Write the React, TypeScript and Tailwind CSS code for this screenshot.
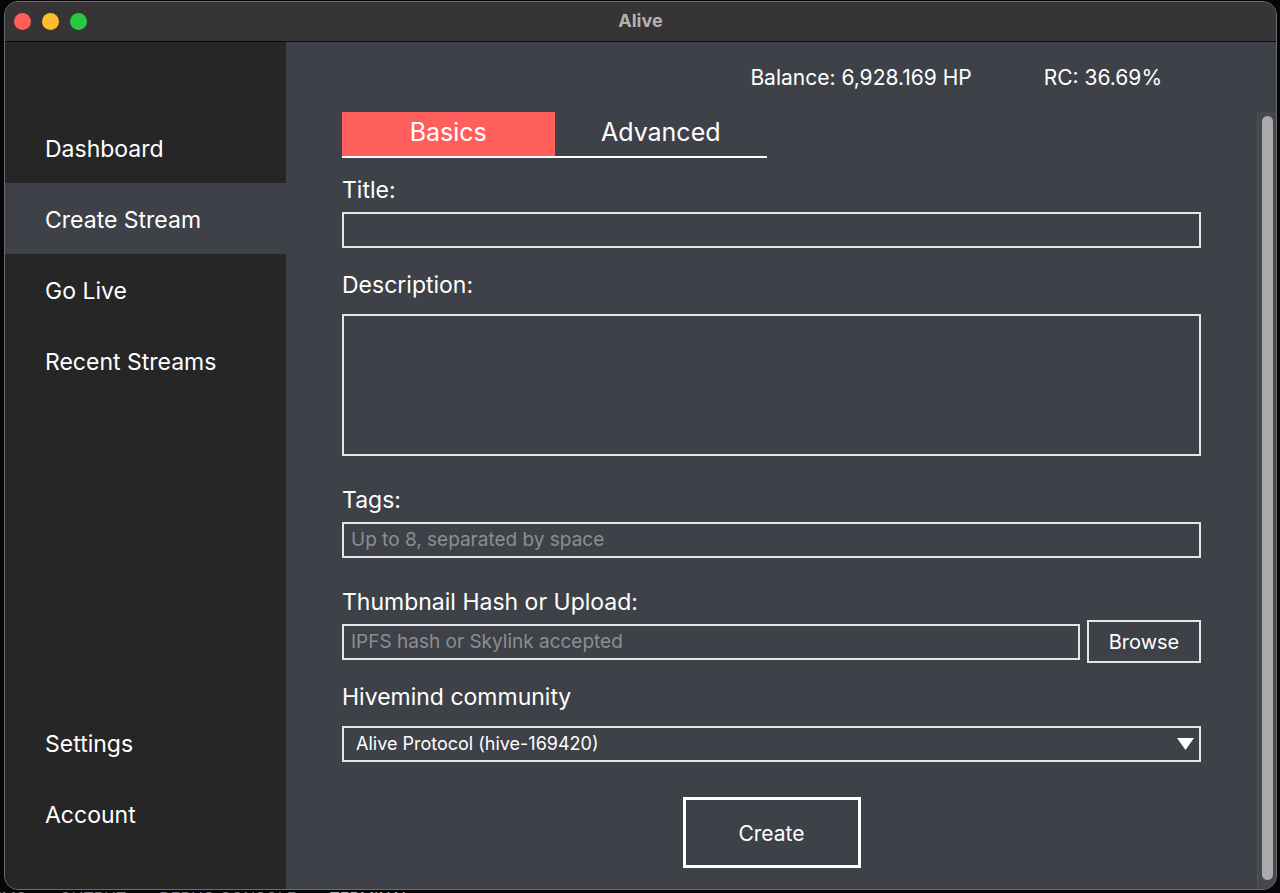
import { useState } from "react";

const mainNav = ["Dashboard", "Create Stream", "Go Live", "Recent Streams"];
const bottomNav = ["Settings", "Account"];
const tabs = ["Basics", "Advanced"];

const labelClass = "block text-[23px] leading-8";
const inputClass =
  "block h-9 w-full border-2 border-[#e4e5e8] bg-transparent px-[7px] pb-px text-[19px] placeholder:text-[#8d8e90] outline-none";

function NavItem({ label, active, onSelect }: { label: string; active: boolean; onSelect: () => void }) {
  return (
    <a
      href="#"
      onClick={(e) => {
        e.preventDefault();
        onSelect();
      }}
      className={`flex h-[71px] items-center px-10 pt-1 text-[23px] ${active ? "bg-[#3e4148]" : "hover:bg-[#303134]"}`}
    >
      {label}
    </a>
  );
}

function TitleBar() {
  return (
    <header className="grid h-10 shrink-0 grid-cols-3 items-center border-b border-[#0c0c0e] bg-[#373436] px-[9px]">
      <div className="flex gap-[11px]">
        <button aria-label="Close" className="size-[17px] rounded-full bg-[#ff5f57]" />
        <button aria-label="Minimize" className="size-[17px] rounded-full bg-[#febc2e]" />
        <button aria-label="Zoom" className="size-[17px] rounded-full bg-[#28c840]" />
      </div>
      <h1 className="pb-0.5 text-center text-lg font-bold text-[#b3b1b2]">Alive</h1>
    </header>
  );
}

export default function App() {
  const [page, setPage] = useState("Create Stream");
  const [tab, setTab] = useState("Basics");

  return (
    <div className="flex h-screen flex-col overflow-hidden bg-[#060608] pt-px pr-[3px] pl-1 font-['Inter',sans-serif] text-white">
      <div className="flex min-h-0 flex-1 flex-col overflow-hidden rounded-[14px] border border-[#6c6c6f] bg-[#3e4148]">
        <TitleBar />

        <div className="flex min-h-0 flex-1">
          {/* Sidebar */}
          <nav className="flex w-[281px] shrink-0 flex-col justify-between bg-[#262626] pt-[70px] pb-10">
            <div>
              {mainNav.map((label) => (
                <NavItem key={label} label={label} active={page === label} onSelect={() => setPage(label)} />
              ))}
            </div>
            <div>
              {bottomNav.map((label) => (
                <NavItem key={label} label={label} active={page === label} onSelect={() => setPage(label)} />
              ))}
            </div>
          </nav>

          <main className="flex min-w-0 flex-1 flex-col">
            <div className="flex h-[70px] shrink-0 items-center justify-end gap-[72px] pt-0.5 pr-[114px] text-[21px]">
              <span>Balance: 6,928.169 HP</span>
              <span>RC: 36.69%</span>
            </div>

            <div className="flex min-h-0 flex-1">
              <form className="min-w-0 flex-1 px-14" onSubmit={(e) => e.preventDefault()}>
                <div role="tablist" className="grid w-[425px] grid-cols-2 border-b-2 border-white">
                  {tabs.map((name) => (
                    <button
                      key={name}
                      type="button"
                      role="tab"
                      aria-selected={tab === name}
                      onClick={() => setTab(name)}
                      className={`h-11 pb-0.5 text-[25px] ${tab === name ? "bg-[#ff5f5c]" : ""}`}
                    >
                      {name}
                    </button>
                  ))}
                </div>

                <div className="mt-4">
                  <label htmlFor="title" className={labelClass}>Title:</label>
                  <input id="title" className={`mt-1.5 ${inputClass}`} />
                </div>

                <div className="mt-[21px]">
                  <label htmlFor="description" className={labelClass}>Description:</label>
                  <textarea
                    id="description"
                    className="mt-[13px] block h-[142px] w-full resize-none border-2 border-[#e4e5e8] bg-transparent px-[7px] py-1 text-[19px] outline-none"
                  />
                </div>

                <div className="mt-7">
                  <label htmlFor="tags" className={labelClass}>Tags:</label>
                  <input id="tags" placeholder="Up to 8, separated by space" className={`mt-1.5 ${inputClass}`} />
                </div>

                <div className="mt-7">
                  <label htmlFor="thumbnail" className={labelClass}>Thumbnail Hash or Upload:</label>
                  <div className="mt-0.5 flex items-center gap-[7px]">
                    <input id="thumbnail" placeholder="IPFS hash or Skylink accepted" className={inputClass} />
                    <button type="button" className="h-[43px] w-[114px] shrink-0 border-2 border-[#e4e5e8] text-xl">
                      Browse
                    </button>
                  </div>
                </div>

                <div className="mt-[18px]">
                  <label htmlFor="community" className={labelClass}>Hivemind community</label>
                  <div className="relative mt-[13px]">
                    <select
                      id="community"
                      className="block h-9 w-full appearance-none border-2 border-[#e4e5e8] bg-transparent px-3 text-lg outline-none"
                    >
                      <option>Alive Protocol (hive-169420)</option>
                    </select>
                    <svg viewBox="0 0 17 12" className="pointer-events-none absolute top-3 right-[7px] h-3 w-[17px]">
                      <path d="M0 0h17L8.5 12z" fill="#fff" />
                    </svg>
                  </div>
                </div>

                <button
                  type="submit"
                  className="mx-auto mt-[35px] block h-[71px] w-[178px] border-3 border-white pt-0.5 text-[21px]"
                >
                  Create
                </button>
              </form>

              {/* Scrollbar */}
              <div className="w-[19px] border-l border-[#4f5157] bg-[#46484e] pt-1 pr-[3px] pb-[9px] pl-1">
                <div className="h-full rounded-full bg-[#a8aaac]" />
              </div>
            </div>
          </main>
        </div>
      </div>

      {/* Editor panel behind the window */}
      <div className="-ml-3 flex h-[3px] shrink-0 gap-[33px] overflow-hidden text-base leading-4 text-[#77777a]">
        <span>EMS</span>
        <span>OUTPUT</span>
        <span>DEBUG CONSOLE</span>
        <span className="text-[#b4b4b6]">TERMINAL</span>
      </div>
    </div>
  );
}
